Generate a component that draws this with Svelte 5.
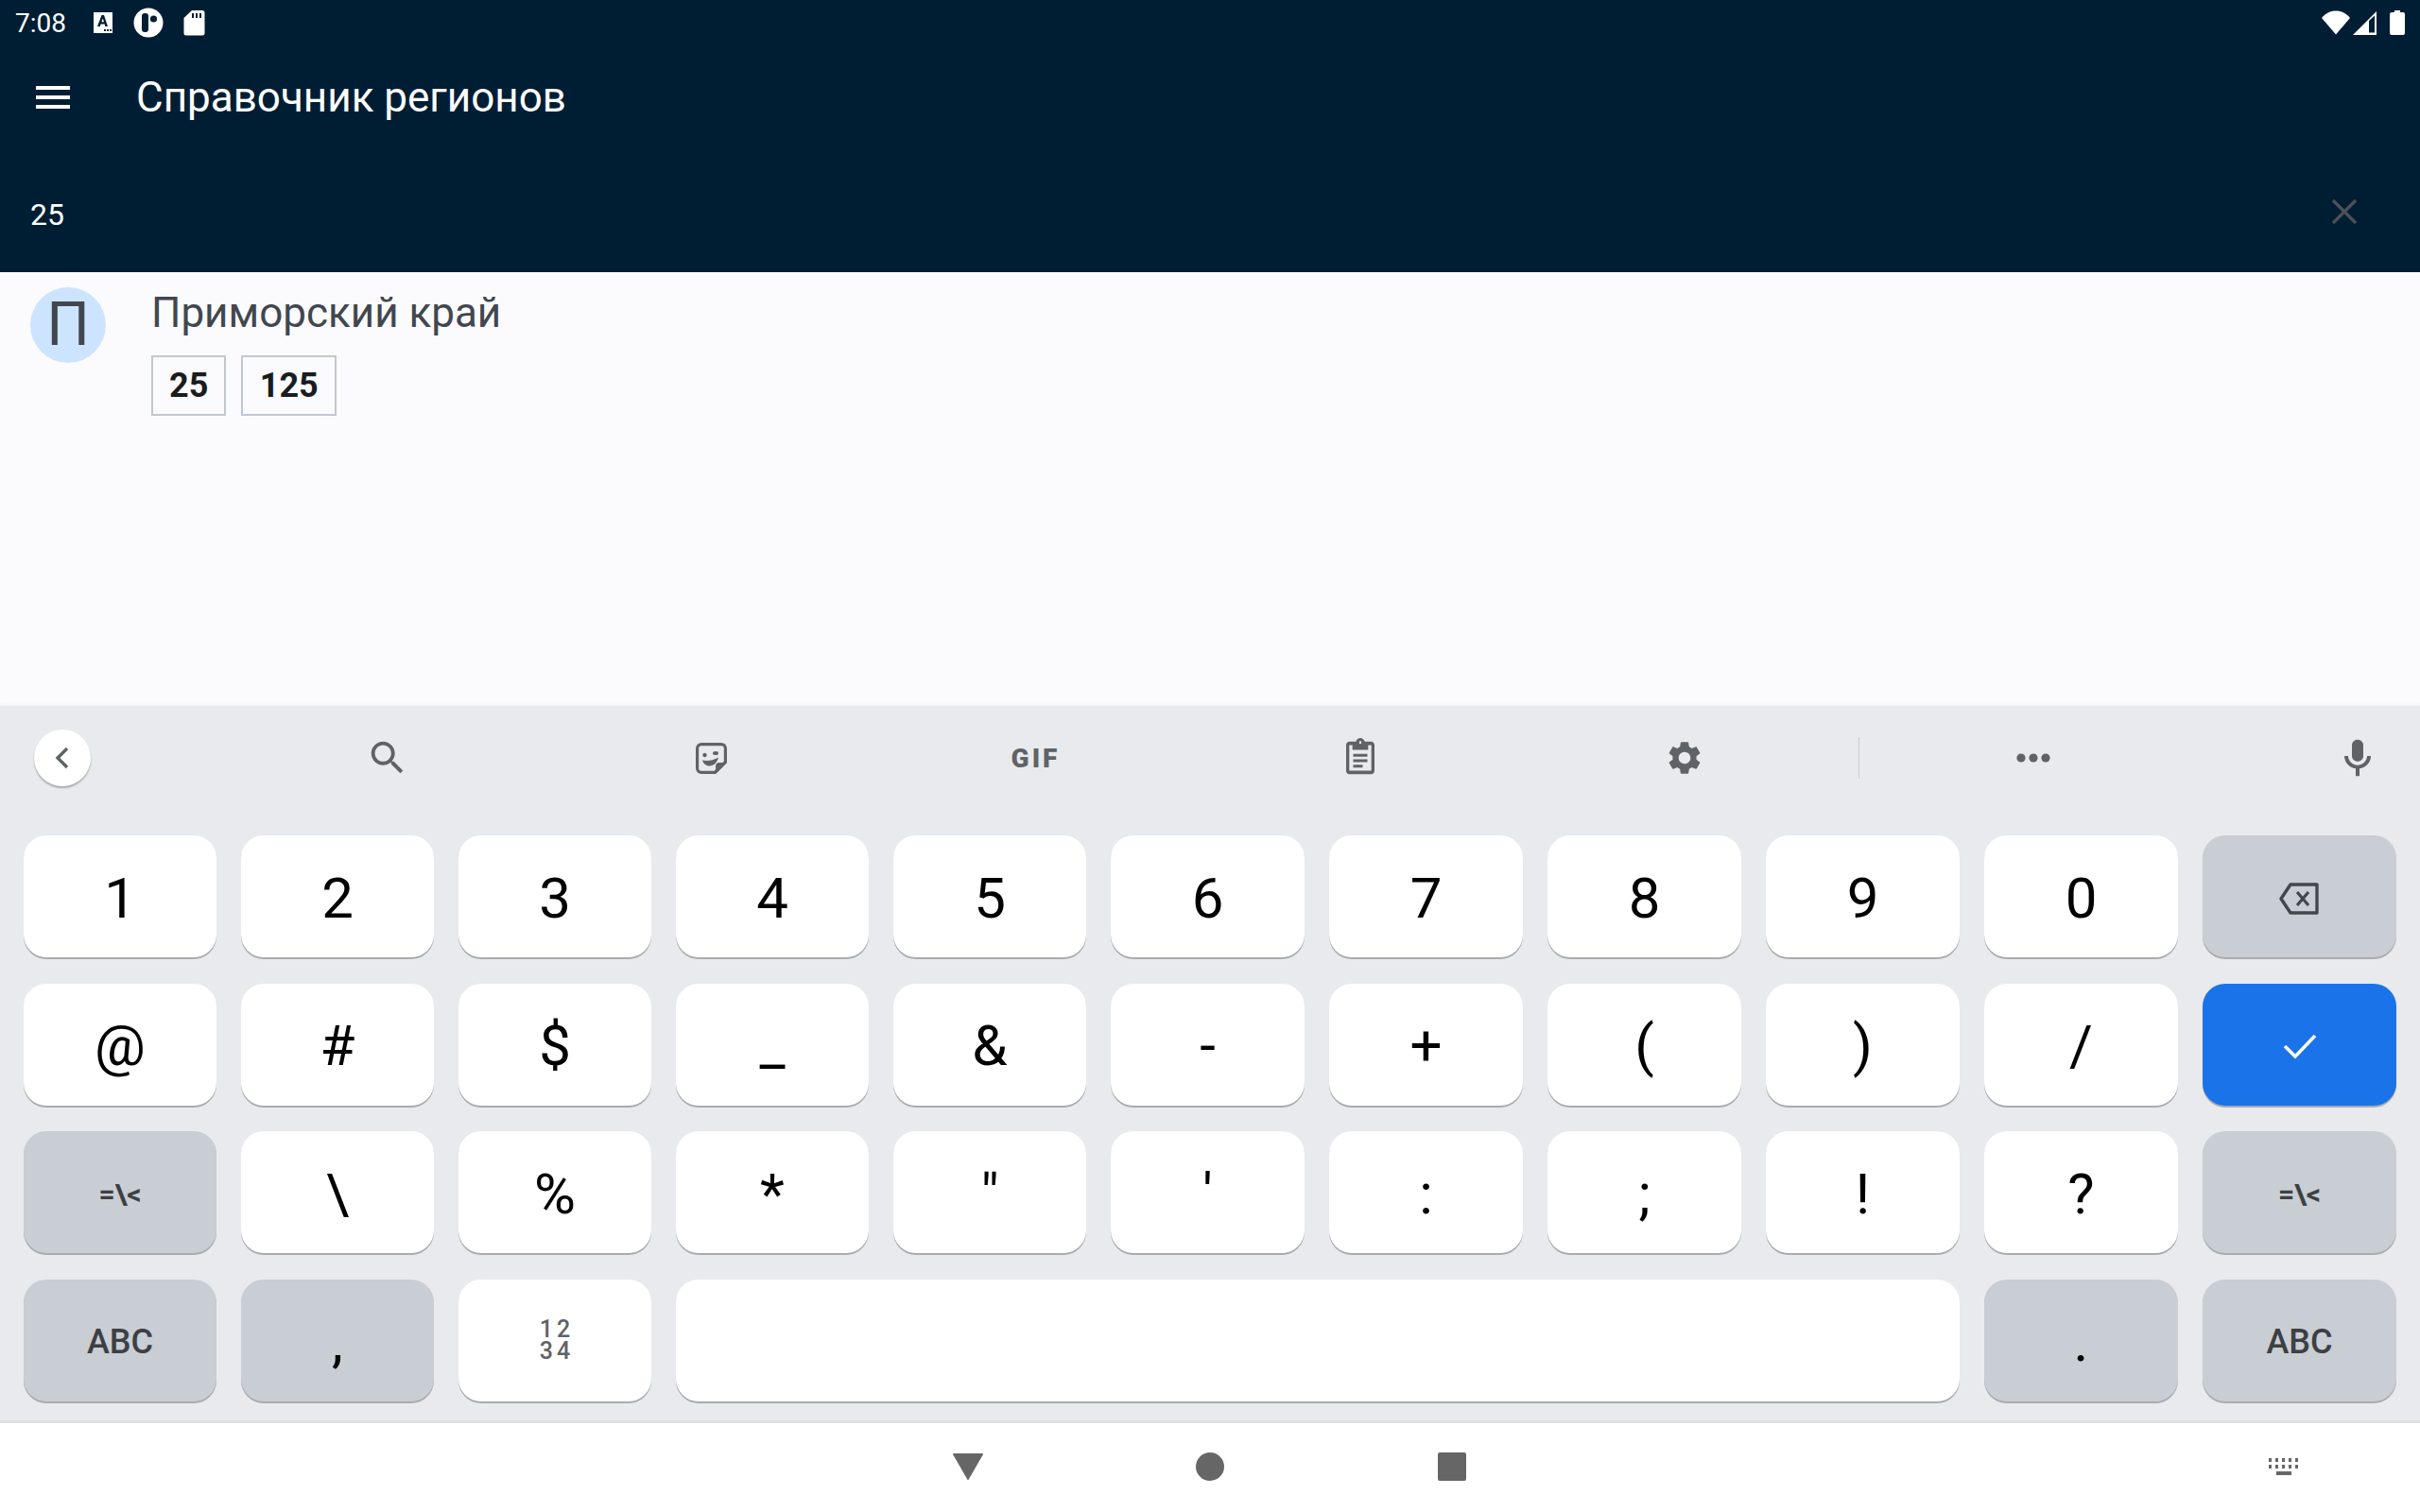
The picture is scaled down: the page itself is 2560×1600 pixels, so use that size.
<script lang="ts">
	const rowOne = ['1', '2', '3', '4', '5', '6', '7', '8', '9', '0'];
	const rowTwo = ['@', '#', '$', '_', '&', '-', '+', '(', ')', '/'];
	const rowThree = ['\\', '%', '*', '"', "'", ':', ';', '!', '?'];
	const searchValue = '25';
	const codes = ['25', '125'];
</script>

<div class="screen">
	<header class="appbar">
		<div class="status">
			<div class="status__left">
				<span class="status__time">7:08</span>
				<svg class="notif" width="22" height="24" viewBox="0 0 22 24">
					<rect x="1" y="1" width="20" height="22" fill="#fff" />
					<path d="M5 16 9.500 4h2.500L16 16h-2.600l-.8-2.600H8.600L7.800 16zM9.400 11.200h2.600L10.800 7.400z" fill="#001e33" fill-rule="evenodd" />
					<path d="M12 19h2v2h-2zM15 19h2v2h-2zM18 19h2v2h-2z" fill="#001e33" />
				</svg>
				<svg class="notif" width="32" height="32" viewBox="0 0 32 32">
					<circle cx="16" cy="16" r="15.500" fill="#fff" />
					<rect x="9" y="6" width="7" height="20" rx="3" fill="#001e33" />
					<circle cx="21.500" cy="12" r="3.600" fill="#001e33" />
				</svg>
				<svg class="notif" width="23" height="28" viewBox="0 0 23 28">
					<path d="M9 1h11a2.500 2.500 0 0 1 2.500 2.500V25a2.500 2.500 0 0 1-2.500 2.500H3A2.500 2.500 0 0 1 .5 25V9z" fill="#fff" />
					<path d="M9 4h2v5H9zM13 4h2v5h-2zM17 4h2v5h-2z" fill="#001e33" />
				</svg>
			</div>
			<div class="status__right">
				<svg width="30" height="26" viewBox="0 0 30 26">
					<path d="M0 8C4 3 9 .5 15 .5S26 3 30 8L15 25.500z" fill="#fff" />
				</svg>
				<svg class="status__signal" width="25" height="26" viewBox="0 0 25 26">
					<path d="M25 1v25H0z" fill="#fff" />
					<path d="M17 11 23 5.500V23.500H17z" fill="#001e33" />
				</svg>
				<svg class="status__battery" width="16" height="26" viewBox="0 0 16 26">
					<path d="M5 0h6v2h3a2 2 0 0 1 2 2v20a2 2 0 0 1-2 2H2a2 2 0 0 1-2-2V4a2 2 0 0 1 2-2h3z" fill="#fff" />
				</svg>
			</div>
		</div>
		<div class="toolbar">
			<svg class="menu" width="36" height="24" viewBox="0 0 36 24">
				<path d="M0 0h36v4H0zM0 10h36v4H0zM0 20h36v4H0z" fill="#fff" />
			</svg>
			<h1>Справочник регионов</h1>
		</div>
		<div class="search">
			<span>{searchValue}</span>
			<svg width="28" height="28" viewBox="0 0 28 28">
				<path d="M2 2 26 26M26 2 2 26" stroke="#4d5055" stroke-width="3.200" fill="none" />
			</svg>
		</div>
	</header>

	<main class="list">
		<div class="region">
			<div class="avatar">П</div>
			<div class="region__body">
				<div class="region__name">Приморский край</div>
				<div class="region__codes">
					{#each codes as code}
						<span class="code">{code}</span>
					{/each}
				</div>
			</div>
		</div>
	</main>

	<section class="keyboard">
		<div class="kb-tools">
			<button type="button" class="kb-back" aria-label="Back">
				<svg width="22" height="28" viewBox="0 0 22 28">
					<path d="M16 4 6 14l10 10" stroke="#5f6368" stroke-width="3.400" fill="none" />
				</svg>
			</button>
			<div class="tool">
				<svg width="46" height="46" viewBox="0 0 24 24" fill="#5f6368">
					<path d="M15.500 14h-.79l-.28-.27C15.410 12.590 16 11.110 16 9.500 16 5.910 13.090 3 9.500 3S3 5.910 3 9.500 5.910 16 9.500 16c1.610 0 3.090-.59 4.230-1.570l.27.28v.79l5 4.990L20.490 19l-4.990-5zm-6 0C7.010 14 5 11.990 5 9.500S7.010 5 9.500 5 14 7.010 14 9.500 11.990 14 9.500 14z" />
				</svg>
			</div>
			<div class="tool">
				<svg width="33" height="33" viewBox="0 0 33 33" fill="#5f6368">
					<path d="M6 0h21a6 6 0 0 1 6 6v15L21 33H6a6 6 0 0 1-6-6V6a6 6 0 0 1 6-6zm0 3.200A2.800 2.800 0 0 0 3.200 6v21A2.800 2.800 0 0 0 6 29.800h13.500L29.800 19.500V6A2.800 2.800 0 0 0 27 3.200z" fill-rule="evenodd" />
					<path d="M21 33 33 21H25a4 4 0 0 0-4 4z" />
					<circle cx="9.500" cy="13" r="2.200" />
					<ellipse cx="21" cy="11" rx="3" ry="2" />
					<path d="M7 18.500c5 1 11 .5 17-3-1 5-5 9-9.500 9-3.500 0-6.500-2.500-7.500-6z" />
				</svg>
			</div>
			<div class="tool tool--gif">GIF</div>
			<div class="tool">
				<svg width="40" height="46" viewBox="0 0 24 24" fill="#5f6368" preserveAspectRatio="none">
					<path d="M19 3h-4.180C14.400 1.840 13.300 1 12 1s-2.400.84-2.820 2H5c-1.100 0-2 .9-2 2v14c0 1.100.9 2 2 2h14c1.100 0 2-.9 2-2V5c0-1.100-.9-2-2-2zm-7-.25c.41 0 .75.34.75.75s-.34.75-.75.75-.75-.34-.75-.75.34-.75.75-.75zM19 19H5V5h2v2.500h10V5h2z" />
					<path d="M7.500 9.800h9v1.500h-9zM7.500 12.800h9v1.500h-9zM7.500 15.800h6v1.500h-6z" />
				</svg>
			</div>
			<div class="tool">
				<svg width="42" height="42" viewBox="0 0 24 24" fill="#5f6368">
					<path d="M19.140 12.940c.04-.3.06-.61.06-.94 0-.32-.02-.64-.07-.94l2.030-1.580c.18-.14.23-.41.12-.61l-1.920-3.320c-.12-.22-.37-.29-.59-.22l-2.390.96c-.5-.38-1.030-.7-1.620-.94l-.36-2.540c-.04-.24-.24-.41-.48-.41h-3.840c-.24 0-.43.17-.47.41l-.36 2.540c-.59.24-1.130.57-1.620.94l-2.390-.96c-.22-.08-.47 0-.59.22L2.740 8.870c-.12.21-.08.47.12.61l2.030 1.580c-.05.3-.09.63-.09.94s.02.64.07.94l-2.030 1.580c-.18.14-.23.41-.12.61l1.920 3.320c.12.22.37.29.59.22l2.390-.96c.5.38 1.030.7 1.620.94l.36 2.540c.05.24.24.41.48.41h3.840c.24 0 .44-.17.47-.41l.36-2.540c.59-.24 1.130-.56 1.620-.94l2.390.96c.22.08.47 0 .59-.22l1.920-3.320c.12-.22.07-.47-.12-.61l-2.010-1.580zM12 15.600c-1.980 0-3.600-1.620-3.600-3.600s1.620-3.600 3.600-3.600 3.600 1.620 3.600 3.600-1.620 3.600-3.600 3.600z" />
				</svg>
			</div>
			<div class="tool-sep"></div>
			<div class="tool">
				<svg width="40" height="12" viewBox="0 0 40 12" fill="#5f6368">
					<circle cx="7" cy="6" r="4.600" />
					<circle cx="20" cy="6" r="4.600" />
					<circle cx="33" cy="6" r="4.600" />
				</svg>
			</div>
			<div class="tool">
				<svg width="48" height="46" viewBox="0 0 24 24" fill="#5f6368" preserveAspectRatio="none">
					<path d="M12 14c1.660 0 3-1.340 3-3V5c0-1.660-1.340-3-3-3S9 3.340 9 5v6c0 1.660 1.340 3 3 3z" />
					<path d="M17 11c0 2.760-2.240 5-5 5s-5-2.240-5-5H5c0 3.530 2.610 6.430 6 6.920V22h2v-4.080c3.390-.49 6-3.390 6-6.920h-2z" />
				</svg>
			</div>
		</div>

		<div class="keys">
			{#each rowOne as k}
				<div class="key">{k}</div>
			{/each}
			<div class="key key--fn" aria-label="Backspace">
				<svg width="44" height="36" viewBox="0 0 44 36" fill="none">
					<path d="M12 3h28v30H12L2 18z" stroke="#44474a" stroke-width="3.400" stroke-linejoin="round" />
					<path d="M19 11 31 25M31 11 19 25" stroke="#44474a" stroke-width="3.200" />
				</svg>
			</div>

			{#each rowTwo as k}
				<div class="key">{k}</div>
			{/each}
			<div class="key key--go" aria-label="Done">
				<svg width="36" height="28" viewBox="0 0 36 28" fill="none">
					<path d="M2 14 13 25 34 3" stroke="#fff" stroke-width="3.600" />
				</svg>
			</div>

			<div class="key key--fn key--small">=\&lt;</div>
			{#each rowThree as k}
				<div class="key">{k}</div>
			{/each}
			<div class="key key--fn key--small">=\&lt;</div>

			<div class="key key--fn key--label">ABC</div>
			<div class="key key--fn">,</div>
			<div class="key key--numpad"><span>12</span><span>34</span></div>
			<div class="key key--space"></div>
			<div class="key key--fn">.</div>
			<div class="key key--fn key--label">ABC</div>
		</div>
	</section>

	<nav class="navbar">
		<svg class="nav-back" width="34" height="28" viewBox="0 0 34 28">
			<path d="M1 1a1 1 0 0 1 1-1h30a1 1 0 0 1 1 1L18 27a1 1 0 0 1-2 0z" fill="#666" />
		</svg>
		<svg class="nav-home" width="30" height="30" viewBox="0 0 30 30">
			<circle cx="15" cy="15" r="15" fill="#666" />
		</svg>
		<svg class="nav-recent" width="30" height="30" viewBox="0 0 30 30">
			<rect width="30" height="30" rx="2" fill="#666" />
		</svg>
		<svg class="nav-kbd" width="32" height="18" viewBox="0 0 32 18" fill="#666">
			<path d="M0 0h3v4H0zM7 0h3v4H7zM14 0h3v4h-3zM21 0h3v4h-3zM28 0h3v4h-3zM0 7h3v4H0zM7 7h3v4H7zM14 7h3v4h-3zM21 7h3v4h-3zM28 7h3v4h-3zM8 14h16v4H8z" />
		</svg>
	</nav>
</div>

<style>
	:global(body) {
		margin: 0;
		font-family: Roboto, 'Noto Sans', sans-serif;
	}

	.screen {
		display: flex;
		flex-direction: column;
		width: 2560px;
		height: 1600px;
		overflow: hidden;
		background: #fff;
	}

	.appbar {
		height: 288px;
		flex: none;
		display: flex;
		flex-direction: column;
		background: #001e33;
		color: #fff;
	}

	.status {
		height: 48px;
		display: flex;
		align-items: center;
		justify-content: space-between;
		padding: 0 16px;
	}

	.status__left {
		display: flex;
		align-items: center;
		gap: 21px;
	}

	.status__time {
		font-size: 28px;
		width: 55px;
		margin-right: 6px;
	}

	.status__right {
		display: flex;
		align-items: center;
	}

	.status__signal {
		margin-left: 3px;
	}

	.status__battery {
		margin-left: 14px;
	}

	.notif {
		display: block;
	}

	.toolbar {
		height: 110px;
		display: flex;
		align-items: center;
		padding-left: 38px;
	}

	.menu {
		flex: none;
	}

	.toolbar h1 {
		margin: 0 0 0 70px;
		font-size: 44px;
		font-weight: 400;
	}

	.search {
		flex: 1;
		display: flex;
		align-items: center;
		justify-content: space-between;
		padding: 8px 66px 0 32px;
		font-size: 32px;
	}

	.search svg {
		margin-bottom: 6px;
	}

	.list {
		flex: 1;
		background: #fbfbfe;
		padding: 16px 32px;
		box-shadow: inset 0 -3px 3px -2px #eeeef0;
	}

	.region {
		display: flex;
		gap: 48px;
	}

	.avatar {
		width: 80px;
		height: 80px;
		border-radius: 50%;
		background: #cce4ff;
		color: #42474e;
		font-size: 64px;
		line-height: 80px;
		text-align: center;
	}

	.region__name {
		font-size: 44px;
		line-height: 52px;
		margin-top: 1px;
		color: #42474e;
	}

	.region__codes {
		display: flex;
		gap: 16px;
		margin-top: 19px;
	}

	.code {
		display: block;
		height: 60px;
		padding: 0 17px;
		border: 2px solid #c2c7cf;
		font-size: 36px;
		font-weight: 700;
		line-height: 60px;
		color: #1a1c1e;
	}

	.code + .code {
		padding: 0 17.500px;
	}

	.keyboard {
		height: 759px;
		flex: none;
		box-sizing: border-box;
		background: #e8eaed;
		border-bottom: 3px solid #e0e0e0;
		padding-top: 25px;
	}

	.kb-tools {
		height: 60px;
		display: flex;
		align-items: center;
		padding-left: 36px;
	}

	.kb-back {
		width: 60px;
		height: 60px;
		margin-right: 142px;
		flex: none;
		padding: 0;
		border: 0;
		border-radius: 50%;
		background: #fff;
		box-shadow: 0 2px 2px rgba(0, 0, 0, 0.28);
		display: flex;
		align-items: center;
		justify-content: center;
	}

	.tool {
		display: flex;
		align-items: center;
		justify-content: center;
		flex: none;
		width: 343px;
	}

	.tool--gif {
		color: #5f6368;
		font-size: 28px;
		font-weight: 900;
		letter-spacing: 3px;
	}

	.tool-sep {
		width: 1px;
		height: 44px;
		margin: 0 12px 0 13px;
		flex: none;
		background: #c8cbd0;
	}

	.keys {
		display: grid;
		grid-template-columns: repeat(5, 204px) repeat(6, 205px);
		grid-auto-rows: 129px;
		column-gap: 26px;
		row-gap: 27.670px;
		padding: 52px 25px 0;
	}

	.key {
		display: flex;
		align-items: center;
		justify-content: center;
		box-sizing: border-box;
		padding-top: 4px;
		background: #fff;
		border-radius: 24px;
		box-shadow: 0 2px 0 #a9abae;
		font-size: 60px;
		line-height: 1;
		color: #000;
	}

	.key--fn {
		background: #c9cdd4;
	}

	.key--go {
		background: #1a73e8;
	}

	.key--small {
		font-size: 30px;
		font-weight: 700;
		color: #3c4043;
	}

	.key--label {
		font-size: 36px;
		font-weight: 500;
		color: #3c4043;
	}

	.key--numpad {
		flex-direction: column;
		padding-top: 0;
		font-size: 25px;
		font-weight: 500;
		color: #5f6368;
		line-height: 23px;
		letter-spacing: 4px;
		text-indent: 4px;
	}

	.key--space {
		grid-column: span 6;
	}

	.navbar {
		height: 94px;
		box-sizing: border-box;
		flex: none;
		display: flex;
		align-items: center;
		padding: 0 0 3px 1007px;
	}

	.nav-home {
		margin-left: 224px;
	}

	.nav-recent {
		margin-left: 226px;
	}

	.nav-kbd {
		margin-left: 849px;
	}
</style>
